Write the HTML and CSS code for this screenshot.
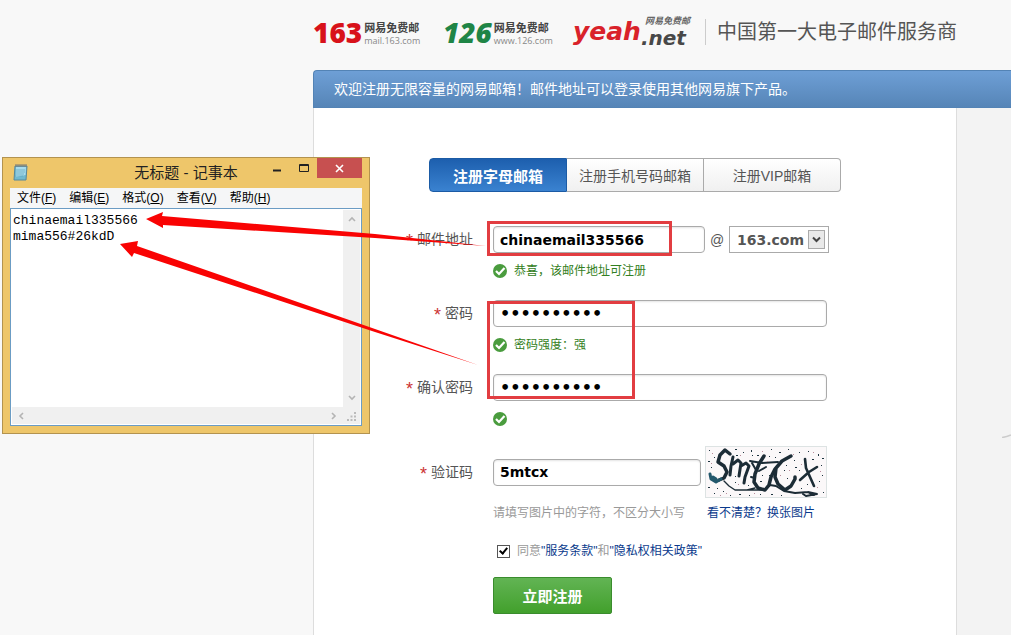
FILE: index.html
```html
<!DOCTYPE html>
<html lang="zh-CN">
<head>
    <meta charset="utf-8">
    <title>注册网易免费邮箱</title>
    <link rel="stylesheet" href="styles.css">
</head>
<body>
    <div class="page">
        <div class="header">
            <a class="logo logo-163" href="#">
                <b>163</b>
                <span class="logo-text"><strong>网易免费邮</strong><small>mail.163.com</small></span>
            </a>
            <a class="logo logo-126" href="#">
                <b>126</b>
                <span class="logo-text"><strong>网易免费邮</strong><small>www.126.com</small></span>
            </a>
            <a class="logo logo-yeah" href="#">
                <b>yeah</b>
                <span class="yeah-text"><em>网易免费邮</em><i>.net</i></span>
            </a>
            <h1>中国第一大电子邮件服务商</h1>
        </div>

        <div class="banner">欢迎注册无限容量的网易邮箱！邮件地址可以登录使用其他网易旗下产品。</div>

        <div class="content">
            <div class="main">
                <div class="tabs">
                    <button type="button" class="tab active">注册字母邮箱</button>
                    <button type="button" class="tab">注册手机号码邮箱</button>
                    <button type="button" class="tab">注册VIP邮箱</button>
                </div>

                <form id="regForm">
                    <div class="field">
                        <label for="email"><em>*</em>邮件地址</label>
                        <div class="control">
                            <div class="line">
                                <input type="text" class="text email" id="email" name="email" value="chinaemail335566">
                                <span class="at">@</span>
                                <div class="select">
                                    <select name="domain" aria-label="邮箱域名">
                                        <option>163.com</option>
                                        <option>126.com</option>
                                        <option>yeah.net</option>
                                    </select>
                                    <span class="select-arrow"><svg width="9" height="7" viewBox="0 0 9 7"><path d="M1 1.5l3.5 3.5L8 1.5" fill="none" stroke="#444" stroke-width="2"/></svg></span>
                                </div>
                            </div>
                            <div class="tip">
                                <svg class="ok" viewBox="0 0 14 14"><use href="#ok-icon"/></svg>恭喜，该邮件地址可注册
                            </div>
                        </div>
                    </div>

                    <div class="field">
                        <label for="password"><em>*</em>密码</label>
                        <div class="control">
                            <input type="password" class="text password" id="password" name="password" value="mima556#26">
                            <div class="tip">
                                <svg class="ok" viewBox="0 0 14 14"><use href="#ok-icon"/></svg>密码强度：强
                            </div>
                        </div>
                    </div>

                    <div class="field confirm">
                        <label for="confirm"><em>*</em>确认密码</label>
                        <div class="control">
                            <input type="password" class="text password" id="confirm" name="confirm" value="mima556#26">
                            <div class="tip">
                                <svg class="ok" viewBox="0 0 14 14"><use href="#ok-icon"/></svg>
                            </div>
                        </div>
                    </div>

                    <div class="field captcha">
                        <label for="code"><em>*</em>验证码</label>
                        <div class="line">
                            <input type="text" class="text code" id="code" name="code" value="5mtcx">
                            <svg class="captcha-img" width="122" height="52" viewBox="0 0 122 52">
                                <rect x="0.5" y="0.5" width="121" height="51" fill="#fbf8f9" stroke="#dde3e3"/>
                                <g fill="none" stroke="#1c2c36" stroke-linecap="round" stroke-linejoin="round">
                                    <path stroke-width="3.5" d="M25 8L20 4L15 9L13 16L19 20L22 26L19 32L14 34"/>
                                    <path stroke="#23586c" stroke-width="3" d="M16 33L11 36L6 33L5 28M11 33L8 31"/>
                                    <path stroke-width="1.4" d="M19 35L24 40L30 44H58M42 44L50 42"/>
                                    <path stroke-width="3" d="M28 11L26 20L25 29M28 18L33 14L36 17L34 30M36 20L41 17L44 20L40 31L39 37"/>
                                    <path stroke-width="3.5" d="M59 10L54 18L50 28L49 36L53 42L60 44L64 39L66 31L70 23"/>
                                    <path stroke-width="2" d="M45 15L57 17L73 16M46 31L50 32M47 17L51 24M54 25L61 21"/>
                                    <path stroke-width="3.5" d="M86 10L77 15L71 22L70 31L73 38L80 44L86 40L90 33V31"/>
                                    <path stroke-width="2" d="M61 43L65 39L71 40L79 45L90 47L103 46L112 48L101 50L98 48M103 46L109 49"/>
                                    <path stroke-width="2.6" d="M100 13L101 22L105 31L109 40M112 21L104 26L95 34"/>
                                </g>
                                <path fill="#1d3440" d="M4 4h1v1h-1zM9 11h1v1h-1zM30 3h2v1h-2zM38 6h1v1h-1zM46 4h1v2h-1zM52 9h2v1h-2zM66 3h1v1h-1zM74 6h2v1h-2zM83 3h1v1h-1zM94 6h1v1h-1zM103 5h1v1h-1zM113 8h1v2h-1zM117 12h2v1h-2zM117 29h1v1h-1zM3 15h2v1h-2zM6 21h1v1h-1zM3 41h2v1h-2zM9 47h1v1h-1zM18 45h1v1h-1zM25 49h1v1h-1zM34 48h2v1h-2zM44 49h1v1h-1zM55 48h1v1h-1zM66 48h2v1h-2zM76 49h1v1h-1zM30 36h1v1h-1zM31 9h2v1h-2zM47 9h1v1h-1zM64 10h1v1h-1zM79 24h1v1h-1zM82 32h1v1h-1zM90 21h2v1h-2zM94 24h1v1h-1zM102 38h1v1h-1zM107 13h2v1h-2zM114 35h1v1h-1zM118 46h1v1h-1zM116 19h1v1h-1zM89 14h1v1h-1zM81 19h1v1h-1zM64 29h1v1h-1zM55 35h2v1h-2zM57 29h1v1h-1zM96 42h1v1h-1zM70 11h1v1h-1zM12 42h1v1h-1zM30 30h1v1h-1zM43 39h1v1h-1z"/>
                                <path fill="#b98d9c" d="M7 7h1v1h-1zM35 9h1v1h-1zM57 5h1v1h-1zM88 8h1v1h-1zM108 6h1v1h-1zM6 17h1v1h-1zM21 47h1v1h-1zM49 47h1v1h-1zM84 24h1v1h-1zM96 18h1v1h-1zM115 25h1v1h-1zM112 41h1v1h-1zM75 29h1v1h-1zM33 38h1v1h-1zM15 49h1v1h-1zM62 15h1v1h-1z"/>
                            </svg>
                        </div>
                    </div>

                    <div class="row hint">
                        <span class="hint-text">请填写图片中的字符，不区分大小写</span>
                        <a href="#">看不清楚？换张图片</a>
                    </div>

                    <div class="row agree">
                        <input type="checkbox" id="agree" name="agree" checked>
                        <label for="agree">同意<a href="#">"服务条款"</a>和<a href="#">"隐私权相关政策"</a></label>
                    </div>

                    <div class="row">
                        <button type="submit" class="submit">立即注册</button>
                    </div>
                </form>
            </div>

            <div class="side">
                <svg width="9" height="4" viewBox="0 0 9 4"><path d="M0 3.5Q5 3 9 1" fill="none" stroke="#ccc" stroke-width="1.5"/></svg>
            </div>
        </div>
    </div>

    <!-- notepad window -->
    <div class="notepad">
        <div class="titlebar">
            <svg class="notepad-icon" width="16" height="18" viewBox="0 0 16 18">
                <path d="M2 3H14L13 17H1Z" fill="#70b9cf" stroke="#57889b"/>
                <path d="M3 4H13L12.500 12L3 14Z" fill="#a9dcec"/>
                <path d="M3 7H12M3 9H12M3 11H11M2.500 13H10" stroke="#5ba3bd" stroke-width="0.7"/>
                <path d="M3 1V4M5 1V4M7 1V4M9 1V4M11 1V4M13 1V4" stroke="#777"/>
            </svg>
            <span class="title">无标题 - 记事本</span>
            <button type="button" class="win-btn" aria-label="最小化"><svg width="10" height="10" viewBox="0 0 10 10"><path d="M1 7.5H9" stroke="#222" stroke-width="2"/></svg></button>
            <button type="button" class="win-btn" aria-label="最大化"><svg width="12" height="10" viewBox="0 0 12 10"><path d="M1.500 1.500H10.500V8.500H1.500ZM1 2.500H11" fill="none" stroke="#222"/></svg></button>
            <button type="button" class="win-btn close" aria-label="关闭"><svg width="9" height="9" viewBox="0 0 9 9"><path d="M1 1L8 8M8 1L1 8" stroke="#fff" stroke-width="1.6"/></svg></button>
        </div>
        <div class="menubar">
            <button type="button">文件(<u>F</u>)</button>
            <button type="button">编辑(<u>E</u>)</button>
            <button type="button">格式(<u>O</u>)</button>
            <button type="button">查看(<u>V</u>)</button>
            <button type="button">帮助(<u>H</u>)</button>
        </div>
        <div class="editor">
            <textarea aria-label="记事本内容" spellcheck="false">chinaemail335566
mima556#26kdD</textarea>
            <div class="scroll scroll-y">
                <svg width="8" height="6" viewBox="0 0 8 6"><path d="M1 5L4 2L7 5" fill="none" stroke="#b4b4b4" stroke-width="1.6"/></svg>
                <svg width="8" height="6" viewBox="0 0 8 6"><path d="M1 1L4 4L7 1" fill="none" stroke="#b4b4b4" stroke-width="1.6"/></svg>
            </div>
            <div class="scroll scroll-x">
                <svg width="6" height="8" viewBox="0 0 6 8"><path d="M5 1L2 4L5 7" fill="none" stroke="#b4b4b4" stroke-width="1.6"/></svg>
                <svg width="6" height="8" viewBox="0 0 6 8"><path d="M1 1L4 4L1 7" fill="none" stroke="#b4b4b4" stroke-width="1.6"/></svg>
            </div>
            <div class="grip">
                <svg width="9" height="9" viewBox="0 0 9 9"><path d="M7 0h2v2h-2zM7 3.500h2v2h-2zM3.500 3.500h2v2h-2zM7 7h2v2h-2zM3.500 7h2v2h-2zM0 7h2v2h-2z" fill="#bbb"/></svg>
            </div>
        </div>
    </div>

    <!-- red marks over the page -->
    <svg class="marks" width="700" height="420" viewBox="0 0 700 420">
        <g fill="none" stroke="#e23d41" stroke-width="3">
            <rect x="488.500" y="222.500" width="182" height="32"/>
            <rect x="488.500" y="302.500" width="145" height="95"/>
        </g>
        <g fill="#f90303">
            <path d="M146 219L163 212L162 216L375 234L486 246L375 238L163 225L163 228Z"/>
            <path d="M120 244L138 241L137 246L375 329L478 365L375 332L134 253L132 257Z"/>
        </g>
    </svg>

    <svg class="defs" width="0" height="0">
        <symbol id="ok-icon" viewBox="0 0 14 14">
            <circle cx="7" cy="7" r="7" fill="#4a9c3e"/>
            <path d="M3 7L6 10L11.500 4" fill="none" stroke="#fff" stroke-width="2.2"/>
        </symbol>
    </svg>
</body>
</html>
```
FILE: styles.css
```css
body {
    margin: 0;
    background: #f8f8f8;
    color: #555;
    font-family: "Liberation Sans", "Noto Sans CJK SC", sans-serif;
    font-size: 12px;
    line-height: 18px;
}
a {
    color: #0a3a8c;
    text-decoration: none;
}
button, input, select, textarea {
    font-family: inherit;
    box-sizing: border-box;
    margin: 0;
}
.page {
    display: flex;
    flex-direction: column;
    min-height: 100vh;
    margin-left: 313px;
}

/* header */
.header {
    display: flex;
    align-items: center;
    height: 70px;
    box-sizing: border-box;
    padding-bottom: 6px;
}
.logo {
    display: flex;
    align-items: center;
    white-space: nowrap;
}
.logo b {
    font-family: "Open Sans", sans-serif;
    font-size: 28px;
    font-weight: 800;
    line-height: 32px;
}
.logo-163, .logo-126 {
    width: 130px;
    gap: 2px;
}
.logo-163 b {
    color: #d8121a;
}
.logo-126 b {
    color: #1f8546;
    font-style: italic;
}
.logo-text {
    display: flex;
    flex-direction: column;
    padding-top: 2px;
}
.logo-text strong {
    color: #444;
    font-size: 11px;
    line-height: 14px;
}
.logo-text small {
    color: #888;
    font-family: "Open Sans", sans-serif;
    font-size: 9px;
    line-height: 11px;
}
.logo-yeah {
    width: 132px;
}
.logo-yeah b {
    color: #d9222a;
    font-family: "DejaVu Sans", sans-serif;
    font-size: 25px;
    font-style: italic;
}
.yeah-text {
    display: flex;
    flex-direction: column;
}
.yeah-text em {
    padding-left: 4px;
    color: #666;
    font-size: 9px;
    font-weight: bold;
    line-height: 12px;
}
.yeah-text i {
    color: #484848;
    font-family: "DejaVu Sans", sans-serif;
    font-size: 20px;
    font-weight: bold;
    line-height: 22px;
}
.header h1 {
    margin: 0;
    padding-left: 11px;
    border-left: 1px solid #ccc;
    color: #555;
    font-size: 20px;
    font-weight: 400;
    line-height: 26px;
    white-space: nowrap;
}

.banner {
    box-sizing: border-box;
    height: 38px;
    padding-left: 20px;
    border: 1px solid #5383b5;
    border-right: 0;
    border-top-left-radius: 4px;
    background: linear-gradient(#6e9fd6, #5685b7);
    color: #fff;
    font-size: 14px;
    line-height: 36px;
}
.content {
    display: flex;
    flex: 1;
}
.main {
    box-sizing: border-box;
    width: 644px;
    padding: 50px 0 20px;
    border: 1px solid #ddd;
    border-width: 0 1px;
    background: #fff;
}
.side {
    display: flex;
    flex: 1;
    justify-content: flex-end;
    padding-top: 326px;
    background: #f3f3f3;
}

/* tabs */
.tabs {
    display: flex;
    width: 412px;
    margin: 0 0 34px 115px;
}
.tab {
    flex: 1 1 0;
    height: 34px;
    padding: 0;
    border: 1px solid #aaa;
    border-left-width: 0;
    background: linear-gradient(#fff, #f0f0f0);
    color: #555;
    font-size: 14px;
    white-space: nowrap;
}
.tab:last-child {
    border-radius: 0 4px 4px 0;
}
.tab.active {
    border: 1px solid #1b5ba5;
    border-radius: 4px 0 0 4px;
    background: linear-gradient(#1d5fae, #3a82d0);
    color: #fff;
    font-size: 15px;
    font-weight: bold;
}

/* form */
.field {
    display: flex;
    gap: 20px;
    margin-bottom: 20px;
}
.confirm {
    margin-bottom: 18px;
}
.captcha {
    align-items: center;
    margin-bottom: 6px;
}
.field label {
    width: 159px;
    font-size: 14px;
    line-height: 27px;
    text-align: right;
}
.field label em {
    margin-right: 4px;
    color: #c33;
    font-size: 18px;
    font-style: normal;
    vertical-align: -3px;
    line-height: 18px;
}
.line {
    display: flex;
    align-items: center;
}
.text {
    display: block;
    height: 27px;
    padding: 0 6px;
    border: 1px solid #aaa;
    border-radius: 4px;
    background: #fff;
    box-shadow: inset 0 1px 2px #e4e4e4;
    color: #000;
    font-family: "DejaVu Sans", sans-serif;
    font-size: 14px;
    font-weight: bold;
}
.email {
    width: 212px;
}
.password {
    width: 334px;
    font-size: 16px;
}
.code {
    width: 208px;
    margin-right: 4px;
}
.at {
    width: 24px;
    font-size: 14px;
    text-align: center;
}
.select {
    position: relative;
}
.select select {
    display: block;
    width: 100px;
    height: 27px;
    padding: 0 7px;
    border: 1px solid #aaa;
    border-radius: 0;
    background: #fff;
    color: #555;
    font-family: "DejaVu Sans", sans-serif;
    font-size: 14px;
    font-weight: bold;
    appearance: none;
}
.select-arrow {
    display: flex;
    align-items: center;
    justify-content: center;
    position: absolute;
    top: 4px;
    right: 4px;
    width: 15px;
    height: 17px;
    border: 1px solid #aaa;
    background: #e9e9e9;
    pointer-events: none;
}
.tip {
    display: flex;
    align-items: center;
    gap: 7px;
    height: 18px;
    margin-top: 9px;
    color: #338022;
}
.ok {
    width: 14px;
    height: 14px;
}
.captcha-img {
    display: block;
}
.row {
    display: flex;
    align-items: center;
    padding-left: 179px;
}
.hint-text {
    width: 214px;
    color: #999;
}
.agree {
    gap: 7px;
    margin: 20px 0 17px 4px;
    color: #999;
}
.agree input {
    width: 13px;
    height: 13px;
    border: 1px solid #555;
    background: #fff;
    appearance: none;
}
.agree input:checked::before {
    content: "";
    display: block;
    width: 3px;
    height: 6px;
    margin-left: 3px;
    border: solid #000;
    border-width: 0 2px 2px 0;
    transform: rotate(40deg);
}
.submit {
    width: 119px;
    height: 37px;
    border: 1px solid #3a8c2d;
    border-radius: 2px;
    background: linear-gradient(#62b454, #42a02c);
    color: #fff;
    font-size: 15px;
    font-weight: bold;
}

/* notepad window */
.notepad {
    display: flex;
    flex-direction: column;
    position: absolute;
    top: 157px;
    left: 2px;
    box-sizing: border-box;
    width: 368px;
    height: 277px;
    padding: 0 7px 7px;
    border: 1px solid #b3934f;
    background: #eec66a;
}
.titlebar {
    display: flex;
    align-items: flex-start;
    height: 30px;
}
.notepad-icon {
    margin: 5px 0 0 3px;
}
.title {
    flex: 1;
    padding-left: 80px;
    color: #222;
    font-size: 15px;
    line-height: 29px;
    text-align: center;
}
.win-btn {
    display: flex;
    align-items: center;
    justify-content: center;
    width: 27px;
    height: 20px;
    padding: 0;
    border: 0;
    background: none;
}
.win-btn.close {
    width: 45px;
    background: #c75050;
}
.menubar {
    display: flex;
    gap: 13px;
    height: 20px;
    padding-left: 7px;
    background: #f5f6f7;
}
.menubar button {
    padding: 0;
    border: 0;
    background: none;
    color: #000;
    font-size: 12px;
    line-height: 20px;
}
.editor {
    display: grid;
    flex: 1;
    grid-template-columns: 1fr 17px;
    grid-template-rows: 1fr 17px;
    padding: 1px;
    border: 1px solid #6b9cc4;
    background: #fff;
}
.editor textarea {
    padding: 3px 1px;
    border: 0;
    background: #fff;
    color: #000;
    font-family: "Liberation Mono", monospace;
    font-size: 13px;
    line-height: 16px;
    resize: none;
    overflow: hidden;
}
.scroll {
    display: flex;
    align-items: center;
    justify-content: space-between;
    background: #f0f0f0;
}
.scroll-y {
    flex-direction: column;
    padding: 6px 0;
}
.scroll-x {
    padding: 0 6px;
}
.grip {
    display: flex;
    align-items: flex-end;
    justify-content: flex-end;
    padding: 0 4px 3px 0;
    background: #f0f0f0;
}

.marks {
    position: absolute;
    top: 0;
    left: 0;
    pointer-events: none;
}
.defs {
    position: absolute;
}
```
